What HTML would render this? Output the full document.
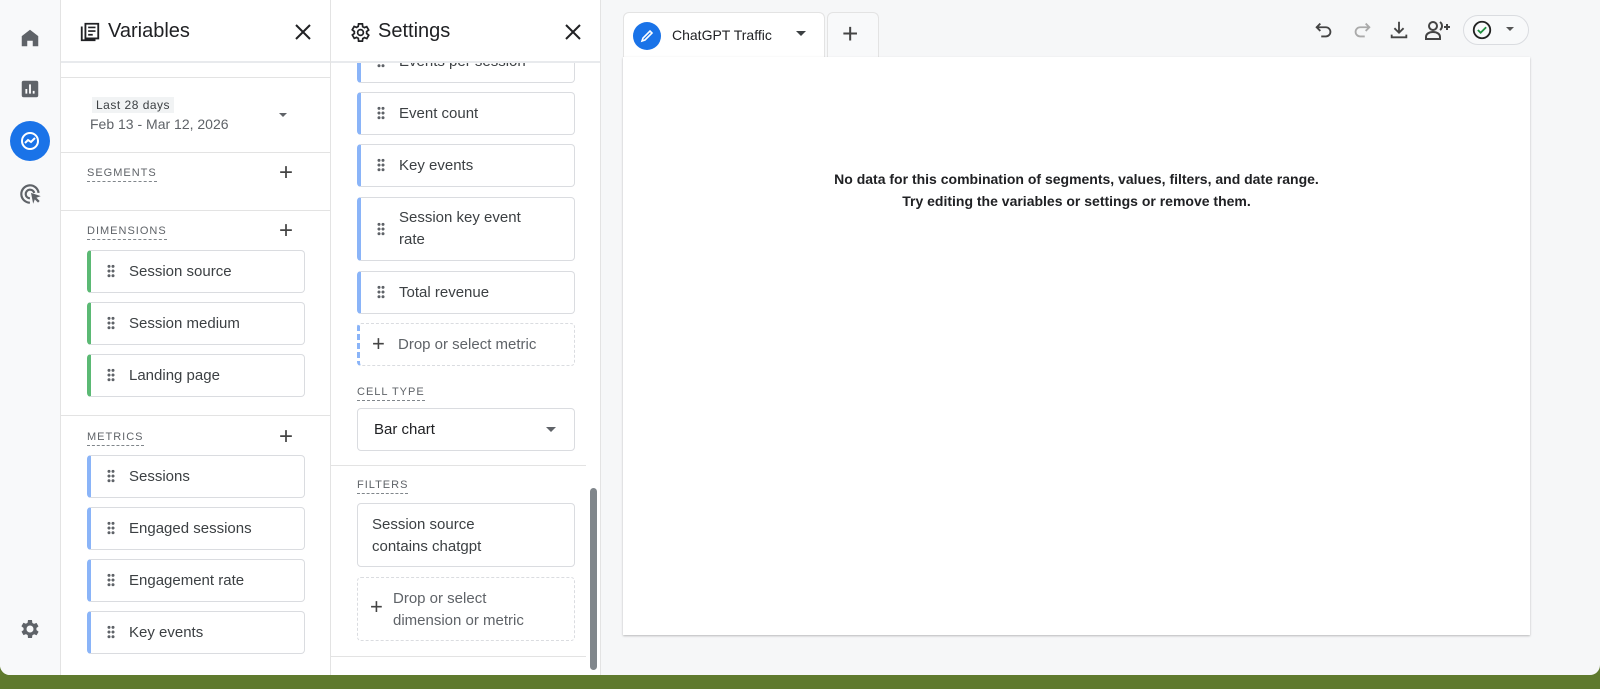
<!DOCTYPE html>
<html><head><meta charset="utf-8"><style>
*{box-sizing:border-box;margin:0;padding:0}
body{width:1600px;height:689px;overflow:hidden;background:#5f7a2e;font-family:"Liberation Sans",Arial,sans-serif;color:#202124;position:relative}
.a{position:absolute}
#win{left:0;top:0;width:1600px;height:675px;background:#f6f7f8;border-radius:0 0 10px 10px;overflow:hidden}
#nav{left:0;top:0;width:61px;height:675px;background:#f8f9fa;border-right:1px solid #e3e3e3}
.panel{top:0;height:675px;background:#fff;border-right:1px solid #e3e3e3}
.hdr{left:0;top:0;width:100%;height:63px;border-bottom:2px solid #e8eaed}
.hdr span{position:absolute;top:20px;font-size:20px;color:#202124}
.line{height:1px;background:#e3e3e3}
.lbl{font-size:11px;letter-spacing:1px;color:#5f6368;border-bottom:1px dashed #80868b;padding-bottom:2px}
.card{width:218px;height:43px;border:1px solid #dadce0;border-radius:4px;font-size:15px;color:#3c4043;padding-left:38px;line-height:41px}
.card.g{border-left:4px solid #5bb974}
.card.b{border-left:4px solid #8ab4f8}
.card .d{position:absolute;left:16px;top:13px;width:8px;height:14px;background:radial-gradient(circle,#5f6368 1.4px,transparent 1.6px) 0 0/4px 4.7px}
.card.t{line-height:22px;padding-top:9px}
.dash{width:218px;border:1px dashed #dadce0;border-radius:4px;font-size:15px;color:#5f6368}
.plus{font-size:24px;color:#444;font-weight:300}
</style></head><body>
<div id="win" class="a">
<div id="nav" class="a">
<svg class="a" style="left:19px;top:27px" width="22" height="22" viewBox="0 0 24 24"><path d="M12 3L3 10v11h6v-6h6v6h6V10z" fill="#5f6368"/></svg>
<svg class="a" style="left:19px;top:78px" width="22" height="22" viewBox="0 0 24 24"><rect x="3" y="3" width="18" height="18" rx="2" fill="#5f6368"/><path d="M7 17v-5h2v5zM11 17V7h2v10zM15 17v-3h2v3z" fill="#fff"/></svg>
<div class="a" style="left:10px;top:121px;width:40px;height:40px;border-radius:50%;background:#1a73e8"></div>
<svg class="a" style="left:18px;top:129px" width="24" height="24" viewBox="0 0 24 24"><circle cx="12" cy="12" r="8" fill="none" stroke="#fff" stroke-width="2"/><path d="M7 14l3-3 3 2 4-4" fill="none" stroke="#fff" stroke-width="2"/></svg>
<svg class="a" style="left:18px;top:181px" width="26" height="26" viewBox="0 0 24 24"><path d="M11 20a8 8 0 1 1 8-9M11 16a4 4 0 1 1 4-5" fill="none" stroke="#5f6368" stroke-width="2"/><path d="M12 11l9 3-4 1.5 3 3-1.5 1.5-3-3L14 21z" fill="#5f6368"/></svg>
<svg class="a" style="left:18px;top:617px" width="24" height="24" viewBox="0 0 24 24"><path d="M19.4 13a7.5 7.5 0 0 0 0-2l2.1-1.6-2-3.5-2.5 1a7 7 0 0 0-1.7-1L15 3h-4l-.4 2.7a7 7 0 0 0-1.7 1l-2.5-1-2 3.5L6.6 11a7.5 7.5 0 0 0 0 2l-2.1 1.6 2 3.5 2.5-1a7 7 0 0 0 1.7 1L11 21h4l.4-2.7a7 7 0 0 0 1.7-1l2.5 1 2-3.5zM13 15.5a3.5 3.5 0 1 1 0-7 3.5 3.5 0 0 1 0 7z" fill="#5f6368" transform="translate(-1 0)"/></svg>
</div>

<div class="a panel" style="left:61px;width:270px">
<div class="a hdr"><svg class="a" style="left:18px;top:21px" width="22" height="22" viewBox="0 0 24 24"><path d="M7 3h14v16H7zM3 6v15h15" fill="none" stroke="#202124" stroke-width="2"/><path d="M10 7h8M10 11h8M10 15h5" stroke="#202124" stroke-width="1.8"/></svg><span style="left:47px">Variables</span>
<svg class="a" style="left:233px;top:23px" width="18" height="18" viewBox="0 0 18 18"><path d="M2 2l14 14M16 2L2 16" stroke="#202124" stroke-width="2"/></svg></div>
<div class="a line" style="left:0;top:77px;width:270px"></div>
<div class="a" style="left:31px;top:97px;background:#f1f3f4;font-size:12px;padding:1px 4px;letter-spacing:.5px;color:#3c4043">Last 28 days</div>
<div class="a" style="left:29px;top:116px;font-size:14px;color:#5f6368">Feb 13 - Mar 12, 2026</div>
<div class="a" style="left:218px;top:113px;border:4px solid transparent;border-top:4px solid #5f6368"></div>
<div class="a line" style="left:0;top:152px;width:270px"></div>
<div class="a lbl" style="left:26px;top:167px">SEGMENTS</div><div class="a plus" style="left:218px;top:159px">+</div>
<div class="a line" style="left:0;top:210px;width:270px"></div>
<div class="a lbl" style="left:26px;top:225px">DIMENSIONS</div><div class="a plus" style="left:218px;top:217px">+</div>
<div class="a card g" style="left:26px;top:250px"><i class="d"></i>Session source</div>
<div class="a card g" style="left:26px;top:302px"><i class="d"></i>Session medium</div>
<div class="a card g" style="left:26px;top:354px"><i class="d"></i>Landing page</div>
<div class="a line" style="left:0;top:415px;width:270px"></div>
<div class="a lbl" style="left:26px;top:431px">METRICS</div><div class="a plus" style="left:218px;top:423px">+</div>
<div class="a card b" style="left:26px;top:455px"><i class="d"></i>Sessions</div>
<div class="a card b" style="left:26px;top:507px"><i class="d"></i>Engaged sessions</div>
<div class="a card b" style="left:26px;top:559px"><i class="d"></i>Engagement rate</div>
<div class="a card b" style="left:26px;top:611px"><i class="d"></i>Key events</div>
</div>

<div class="a panel" style="left:331px;width:270px;overflow:hidden">
<div class="a card b" style="left:26px;top:40px"><i class="d"></i>Events per session</div>
<div class="a hdr" style="background:#fff"><svg class="a" style="left:18px;top:21px" width="23" height="23" viewBox="0 0 24 24"><path d="M19.4 13a7.5 7.5 0 0 0 0-2l2.1-1.6-2-3.5-2.5 1a7 7 0 0 0-1.7-1L15 3h-4l-.4 2.7a7 7 0 0 0-1.7 1l-2.5-1-2 3.5L6.6 11a7.5 7.5 0 0 0 0 2l-2.1 1.6 2 3.5 2.5-1a7 7 0 0 0 1.7 1L11 21h4l.4-2.7a7 7 0 0 0 1.7-1l2.5 1 2-3.5z" fill="none" stroke="#202124" stroke-width="1.8" transform="translate(-1 0)"/><circle cx="12" cy="12" r="3" fill="none" stroke="#202124" stroke-width="1.8"/></svg><span style="left:47px">Settings</span>
<svg class="a" style="left:233px;top:23px" width="18" height="18" viewBox="0 0 18 18"><path d="M2 2l14 14M16 2L2 16" stroke="#202124" stroke-width="2"/></svg></div>
<div class="a card b" style="left:26px;top:92px"><i class="d"></i>Event count</div>
<div class="a card b" style="left:26px;top:144px"><i class="d"></i>Key events</div>
<div class="a card b t" style="left:26px;top:197px;height:64px"><i class="d" style="top:24px"></i>Session key event<br>rate</div>
<div class="a card b" style="left:26px;top:271px"><i class="d"></i>Total revenue</div>
<div class="a dash" style="left:26px;top:323px;height:43px;line-height:41px;padding-left:38px;border-left:3px dashed #8ab4f8">Drop or select metric<span class="a plus" style="left:12px;top:-1px;font-size:22px">+</span></div>
<div class="a lbl" style="left:26px;top:386px">CELL TYPE</div>
<div class="a" style="left:26px;top:408px;width:218px;height:43px;border:1px solid #dadce0;border-radius:4px;font-size:15px;line-height:41px;padding-left:16px">Bar chart<i class="a" style="left:188px;top:18px;border:5px solid transparent;border-top:5px solid #5f6368"></i></div>
<div class="a line" style="left:0;top:465px;width:255px"></div>
<div class="a lbl" style="left:26px;top:479px">FILTERS</div>
<div class="a" style="left:26px;top:503px;width:218px;height:64px;border:1px solid #dadce0;border-radius:4px;font-size:15px;line-height:22px;padding:10px 14px;color:#3c4043">Session source<br>contains chatgpt</div>
<div class="a dash" style="left:26px;top:577px;height:64px;line-height:22px;padding:10px 0 0 35px">Drop or select<br>dimension or metric<span class="a plus" style="left:12px;top:18px;font-size:22px">+</span></div>
<div class="a line" style="left:0;top:656px;width:255px"></div>
<div class="a" style="left:259px;top:488px;width:7px;height:182px;border-radius:4px;background:#80868b"></div>
</div>

<div class="a" style="left:623px;top:12px;width:202px;height:46px;background:#fff;border:1px solid #e3e3e3;border-bottom:none;border-radius:6px 6px 0 0"></div>
<div class="a" style="left:633px;top:22px;width:28px;height:28px;border-radius:50%;background:#1a73e8"></div>
<svg class="a" style="left:640px;top:29px" width="14" height="14" viewBox="0 0 14 14"><path d="M2 12l1-3 7-7 2 2-7 7z" fill="none" stroke="#fff" stroke-width="1.6"/></svg>
<div class="a" style="left:672px;top:27px;font-size:14px;color:#202124">ChatGPT Traffic</div>
<div class="a" style="left:796px;top:31px;border:5px solid transparent;border-top:5px solid #3c4043"></div>
<div class="a" style="left:827px;top:12px;width:52px;height:45px;background:#f8f9fa;border:1px solid #e3e3e3;border-bottom:none;border-radius:6px 6px 0 0"></div>
<div class="a plus" style="left:842px;top:18px;font-size:28px">+</div>

<svg class="a" style="left:1313px;top:19px" width="22" height="22" viewBox="0 0 24 24"><path d="M8 5L4 9l4 4M4 9h10a5 5 0 0 1 0 10H9" fill="none" stroke="#444" stroke-width="2"/></svg>
<svg class="a" style="left:1351px;top:19px" width="22" height="22" viewBox="0 0 24 24"><path d="M16 5l4 4-4 4M20 9H10a5 5 0 0 0 0 10h5" fill="none" stroke="#aaa" stroke-width="2"/></svg>
<svg class="a" style="left:1388px;top:19px" width="22" height="22" viewBox="0 0 24 24"><path d="M12 3v12M7 10l5 5 5-5M4 17v3h16v-3" fill="none" stroke="#444" stroke-width="2"/></svg>
<svg class="a" style="left:1424px;top:18px" width="28" height="24" viewBox="0 0 28 24"><circle cx="9" cy="8" r="4" fill="none" stroke="#444" stroke-width="2"/><path d="M2 21v-2c0-3 3-5 7-5s7 2 7 5v2z" fill="none" stroke="#444" stroke-width="2"/><path d="M16 4a5 5 0 0 1 0 8M23 6v6M20 9h6" fill="none" stroke="#444" stroke-width="2"/></svg>
<div class="a" style="left:1463px;top:15px;width:66px;height:30px;border:1px solid #dadce0;border-radius:15px;background:#f8f9fa"></div>
<svg class="a" style="left:1471px;top:19px" width="22" height="22" viewBox="0 0 24 24"><circle cx="12" cy="12" r="9" fill="none" stroke="#222" stroke-width="2"/><path d="M7.5 12l3 3 6-6" fill="none" stroke="#1e8e3e" stroke-width="2"/></svg>
<div class="a" style="left:1506px;top:27px;border:4px solid transparent;border-top:4px solid #555"></div>

<div class="a" style="left:623px;top:57px;width:907px;height:578px;background:#fff;box-shadow:0 1px 2px rgba(0,0,0,.25)"></div>
<div class="a" style="left:623px;top:168px;width:907px;text-align:center;font-size:14px;font-weight:bold;line-height:22px;color:#202124">No data for this combination of segments, values, filters, and date range.<br>Try editing the variables or settings or remove them.</div>
</div>
</body></html>
